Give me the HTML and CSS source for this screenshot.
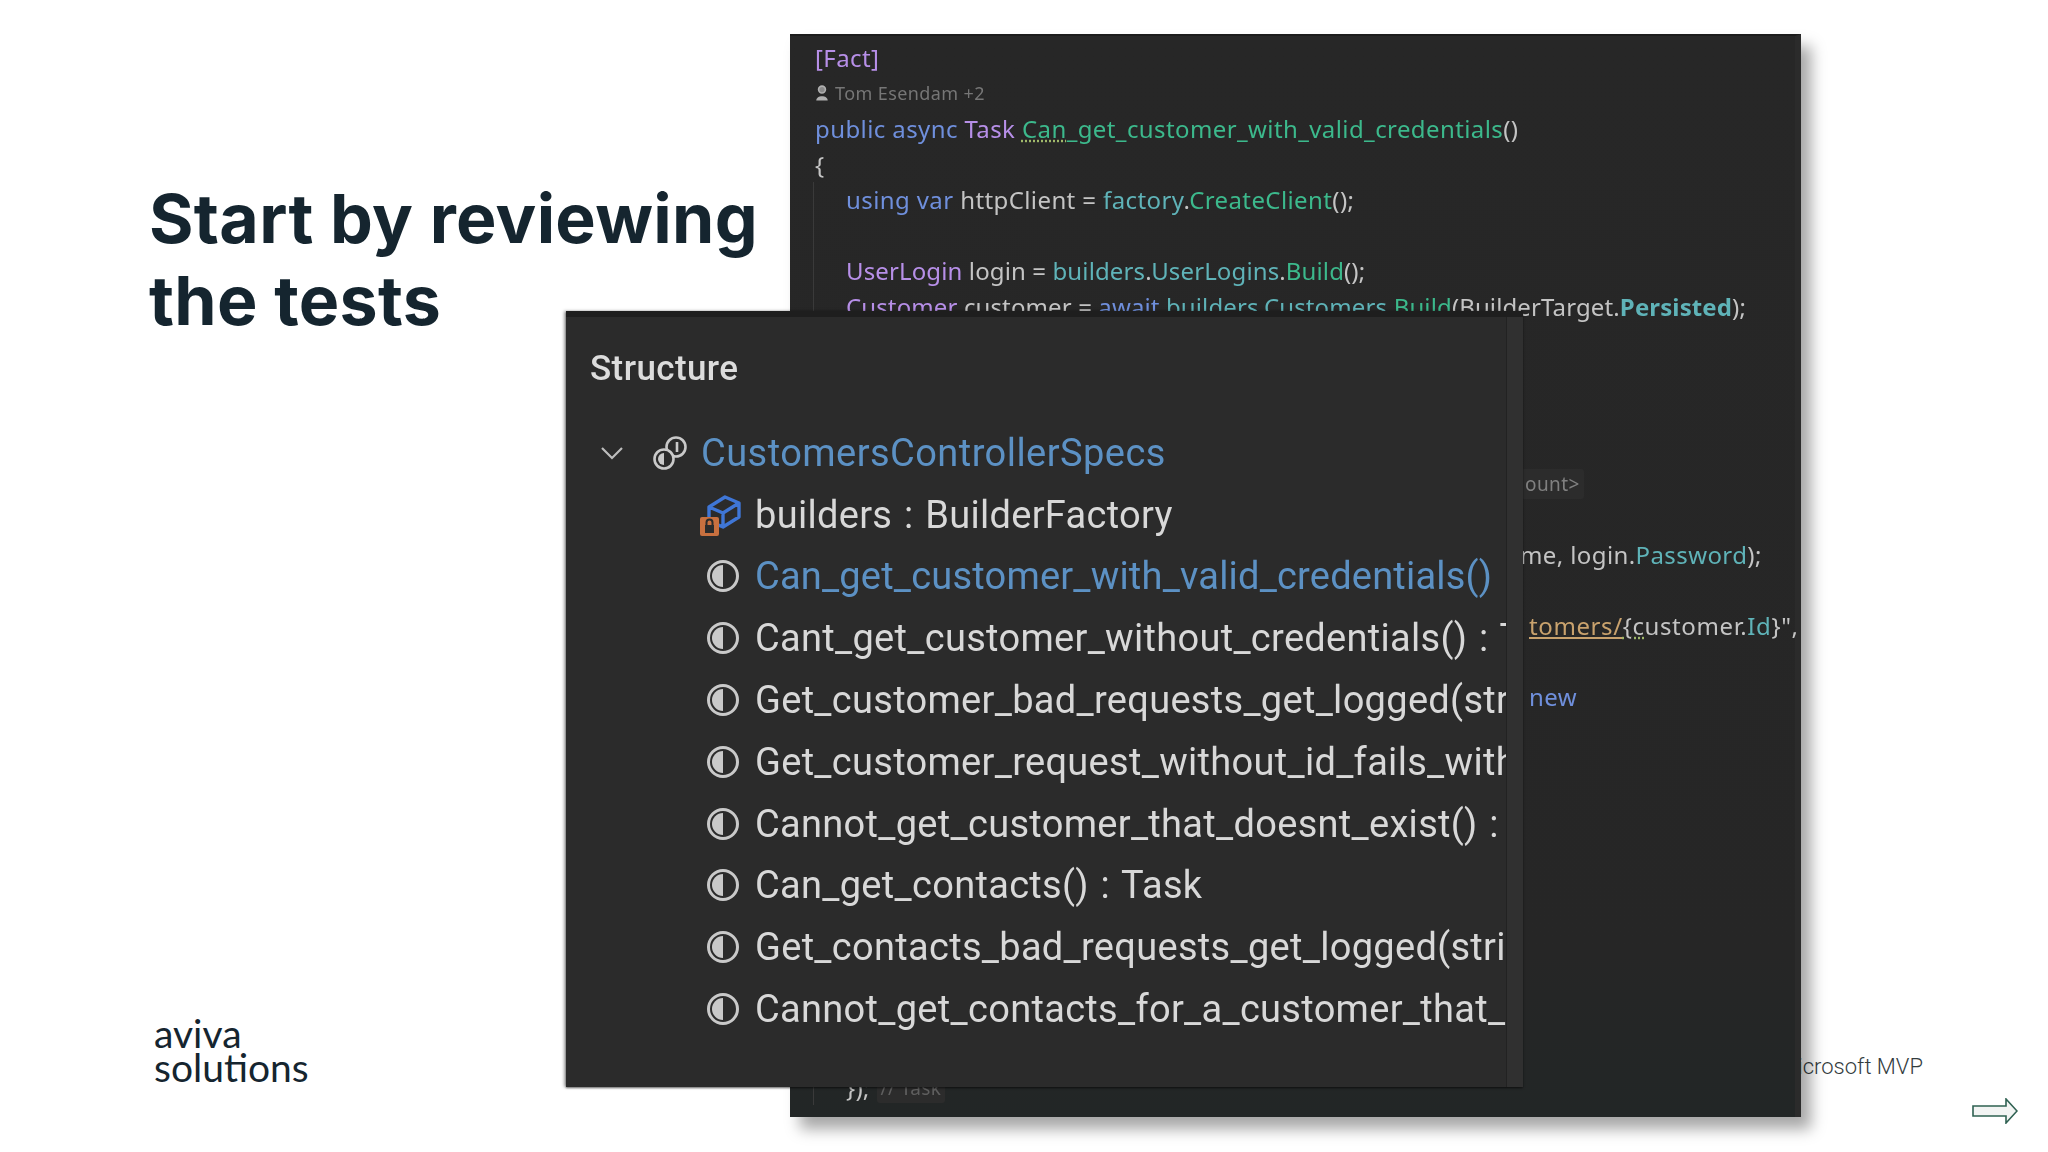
FILE: index.html
```html
<!DOCTYPE html>
<html lang="en">
<head>
    <meta charset="UTF-8">
    <title>Start by reviewing the tests</title>
    <link rel="stylesheet" href="styles.css">
</head>
<body>
    <svg class="icon-defs" width="0" height="0">
        <symbol id="method" viewBox="0 0 36 36">
            <circle cx="18" cy="18" r="14.5" fill="#2b2b2b" stroke="#c9c9c9" stroke-width="3"/>
            <path d="M18 7 A11 11 0 0 0 18 29 Z" fill="#c9c9c9"/>
        </symbol>
    </svg>

    <div class="slide">
        <h1 class="title">Start by reviewing<br>the tests</h1>
        <div class="logo">aviva<br>solutions</div>
    </div>

    <div class="mvp">Microsoft MVP</div>

    <svg class="next-arrow" viewBox="0 0 46 26">
        <path d="M1 8 H34 V1 L45 13 L34 25 V18 H1 Z" fill="#f2f4f3" stroke="#2f6152" stroke-width="1.6"/>
    </svg>

    <div class="editor">
        <div class="code-line"><span class="type">[Fact]</span></div>
        <div class="code-line hint">
            <svg class="hint-user" viewBox="0 0 12 14"><circle cx="6" cy="4" r="3" fill="#8a8a8a" stroke="#b0b0b0" stroke-width="1.4"/><path d="M1 13.5 C1 8.5 11 8.5 11 13.5 Z" fill="#b0b0b0"/></svg>
            Tom Esendam +2
        </div>
        <div class="code-line"><span class="kw">public async</span> <span class="type">Task</span> <span class="method"><span class="squiggle">Can</span>_get_customer_with_valid_credentials</span>()</div>
        <div class="code-line">{</div>
        <div class="code-body">
            <div class="code-line"><span class="kw">using var</span> httpClient = <span class="member">factory</span>.<span class="method">CreateClient</span>();</div>
            <div class="code-line"></div>
            <div class="code-line tight"><span class="type">UserLogin</span> login = <span class="member">builders</span>.<span class="member">UserLogins</span>.<span class="method">Build</span>();</div>
            <div class="code-line tight"><span class="type">Customer</span> customer = <span class="kw">await</span> <span class="member">builders</span>.<span class="member">Customers</span>.<span class="method">Build</span>(BuilderTarget.<span class="member strong">Persisted</span>);</div>
            <div class="code-line"></div>
            <div class="code-line"></div>
            <div class="code-line"></div>
            <div class="code-line"></div>
            <div class="code-line at-account"><span class="inlay">ount&gt;</span></div>
            <div class="code-line"></div>
            <div class="code-line at-login">me, login.<span class="member">Password</span>);</div>
            <div class="code-line"></div>
            <div class="code-line at-url"><span class="url">tomers/</span><span class="squiggle">{c</span>ustomer.<span class="member">Id</span>}",</div>
            <div class="code-line"></div>
            <div class="code-line at-new"><span class="kw">new</span></div>
            <div class="code-line"></div>
            <div class="code-line"></div>
            <div class="code-line"></div>
            <div class="code-line"></div>
            <div class="code-line"></div>
            <div class="code-line"></div>
            <div class="code-line"></div>
            <div class="code-line"></div>
            <div class="code-line"></div>
            <div class="code-line"></div>
            <div class="code-line">}); <span class="inlay faint">// Task</span></div>
        </div>
    </div>

    <div class="structure">
        <div class="structure-main">
            <div class="structure-title">Structure</div>
            <div class="tree-root">
                <svg class="chevron" viewBox="0 0 24 14"><path d="M2 2 L12 12 L22 2" fill="none" stroke="#bdbdbd" stroke-width="2.2"/></svg>
                <svg class="class-icon" viewBox="0 0 36 36">
                    <circle cx="24" cy="12" r="9.5" fill="none" stroke="#c9c9c9" stroke-width="2.6"/>
                    <path d="M25 7 V17" stroke="#c9c9c9" stroke-width="2.6"/>
                    <circle cx="12" cy="24" r="9.5" fill="#2b2b2b" stroke="#c9c9c9" stroke-width="2.6"/>
                    <path d="M12 18 A6 6 0 0 0 12 30 Z" fill="#c9c9c9"/>
                </svg>
                <span class="link">CustomersControllerSpecs</span>
            </div>
            <div class="tree-item">
                <svg class="item-icon field-icon" viewBox="0 0 44 44">
                    <path d="M10 14 L26 4 L40 10 V24 L24 34 L10 28 Z M10 14 L24 20 L40 10 M24 20 V34" fill="#2b2b2b" stroke="#3f76d6" stroke-width="3.4" stroke-linejoin="round"/>
                    <rect x="1" y="24" width="19" height="19" rx="2" fill="#c8703f"/>
                    <rect x="6" y="32" width="9" height="8" fill="#2b2b2b"/>
                    <path d="M7.5 32 V29.5 A3 3 0 0 1 13.5 29.5 V32" fill="none" stroke="#2b2b2b" stroke-width="2"/>
                </svg>
                <span>builders : BuilderFactory</span>
            </div>
            <div class="tree-item"><svg class="item-icon"><use href="#method"/></svg><span class="link">Can_get_customer_with_valid_credentials()</span></div>
            <div class="tree-item"><svg class="item-icon"><use href="#method"/></svg><span>Cant_get_customer_without_credentials() : Task</span></div>
            <div class="tree-item"><svg class="item-icon"><use href="#method"/></svg><span>Get_customer_bad_requests_get_logged(string)</span></div>
            <div class="tree-item"><svg class="item-icon"><use href="#method"/></svg><span>Get_customer_request_without_id_fails_with_404()</span></div>
            <div class="tree-item"><svg class="item-icon"><use href="#method"/></svg><span>Cannot_get_customer_that_doesnt_exist() : Task</span></div>
            <div class="tree-item"><svg class="item-icon"><use href="#method"/></svg><span>Can_get_contacts() : Task</span></div>
            <div class="tree-item"><svg class="item-icon"><use href="#method"/></svg><span>Get_contacts_bad_requests_get_logged(string)</span></div>
            <div class="tree-item"><svg class="item-icon"><use href="#method"/></svg><span>Cannot_get_contacts_for_a_customer_that_doesnt_exist()</span></div>
        </div>
        <div class="structure-strip"></div>
    </div>
</body>
</html>
```

FILE: styles.css
```css
* {
    margin: 0;
    padding: 0;
    box-sizing: border-box;
}

body {
    width: 2048px;
    height: 1152px;
    background: white;
    overflow: hidden;
    position: relative;
    font-family: Inter, 'Noto Sans', sans-serif;
}

.icon-defs {
    position: absolute;
}

.slide {
    height: 100%;
    width: 780px;
    padding: 177px 0 68px 149px;
    display: flex;
    flex-direction: column;
    justify-content: space-between;
}

.title {
    font-size: 68px;
    font-weight: 700;
    line-height: 82px;
    letter-spacing: 0.3px;
    color: #15252f;
}

.logo {
    font-family: Lato, sans-serif;
    font-size: 39px;
    line-height: 34px;
    color: #15252f;
    padding-left: 5px;
}

.mvp {
    position: absolute;
    left: 1680px;
    width: 243px;
    top: 1054px;
    text-align: right;
    font-family: Roboto, sans-serif;
    font-size: 22px;
    font-weight: 300;
    color: #333c3e;
}

.next-arrow {
    position: absolute;
    left: 1972px;
    top: 1098px;
    width: 46px;
    height: 26px;
}

.editor {
    position: absolute;
    left: 790px;
    top: 34px;
    width: 1011px;
    height: 1083px;
    padding: 4px 0 0 25px;
    background: linear-gradient(180deg, #272727 0%, #262626 85%, #222626 100%);
    box-shadow: 10px 12px 14px rgba(0, 0, 0, 0.35);
    border-top: 2px solid #1c1c1c;
    border-right: 6px solid #2b2b2b;
    font-family: 'Noto Sans', sans-serif;
    font-size: 24px;
    letter-spacing: 0.4px;
    color: #c4c4c4;
    filter: blur(0.5px);
}

.code-line {
    height: 35.5px;
    line-height: 35.5px;
    white-space: nowrap;
}

.tight {
    letter-spacing: 0.12px;
}

.code-body {
    margin-left: -2px;
    padding-left: 32px;
    border-left: 1px solid #3a3a3a;
}

.hint {
    font-size: 18px;
    color: #767676;
    display: flex;
    align-items: center;
    gap: 6px;
}

.hint-user {
    width: 14px;
    height: 16px;
}

.kw { color: #6f8fdc; }
.type { color: #b78fe8; }
.method { color: #3cb98c; }
.member { color: #5fb3b8; }
.strong { font-weight: 700; }
.url { color: #c9a26d; text-decoration: underline; }

.squiggle {
    text-decoration: underline dotted #9fb86a;
}

.inlay {
    color: #808080;
    font-size: 19px;
    background: #2c2c2c;
    padding: 2px 4px;
    border-radius: 3px;
    vertical-align: 2px;
}

.faint {
    color: #5f5f5f;
}

.at-account { padding-left: 675px; }
.at-login { padding-left: 674px; }
.at-url { padding-left: 683px; letter-spacing: 0.6px; }
.at-new { padding-left: 683px; }

.structure {
    position: absolute;
    left: 566px;
    top: 311px;
    width: 957px;
    height: 776px;
    background: #2b2b2b;
    border-top: 6px solid #1e1e1e;
    box-shadow: -2px 0 3px rgba(0, 0, 0, 0.35), 0 1px 2px rgba(0, 0, 0, 0.5);
    display: flex;
    filter: blur(0.5px);
}

.structure-main {
    flex: 1;
    min-width: 0;
    overflow: hidden;
    padding: 0 0 0 24px;
}

.structure-strip {
    width: 17px;
    background: #303030;
    border-left: 1px solid #222;
}

.structure-title {
    font-family: Roboto, sans-serif;
    font-size: 35px;
    font-weight: 500;
    letter-spacing: 0.4px;
    color: #dcdcdc;
    height: 62px;
    padding-top: 31px;
    margin-bottom: 43px;
}

.tree-root,
.tree-item {
    display: flex;
    align-items: center;
    height: 61.8px;
    white-space: nowrap;
    font-family: Roboto, sans-serif;
    font-size: 38px;
    letter-spacing: 0.3px;
    word-spacing: 2px;
    color: #d8d8d8;
}

.tree-root {
    padding-left: 10px;
}

.tree-root .link {
    letter-spacing: 0.45px;
}

.chevron {
    width: 24px;
    height: 14px;
    margin-right: 28px;
    flex: none;
}

.class-icon {
    width: 36px;
    height: 36px;
    margin-right: 13px;
    flex: none;
}

.tree-item {
    padding-left: 115px;
}

.tree-item .link {
    letter-spacing: 0.2px;
}

.item-icon {
    width: 36px;
    height: 36px;
    margin-right: 14px;
    flex: none;
}

.field-icon {
    width: 44px;
    height: 44px;
    margin-left: -6px;
    margin-right: 12px;
}

.link {
    color: #5c91c4;
}
```
